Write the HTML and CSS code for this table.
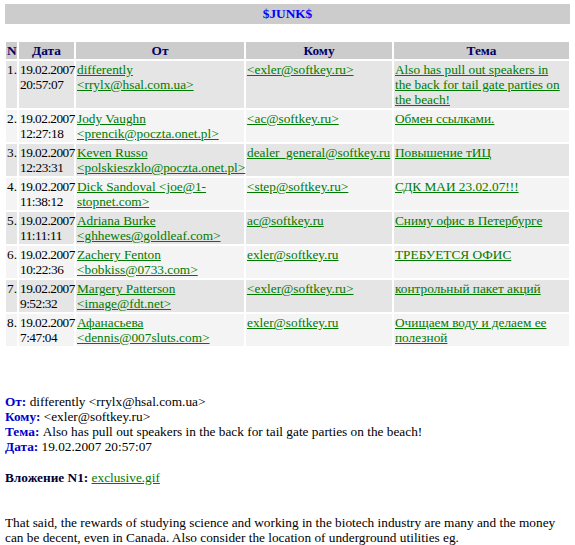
FILE: index.html
```html
<!DOCTYPE html>
<html>
<head>
<meta charset="utf-8">
<title>$JUNK$</title>
<link rel="stylesheet" href="styles.css">
</head>
<body>
<div class="titlebar">$JUNK$</div>
<table class="list">
  <thead>
    <tr><th class="c-n">N</th><th class="c-date">Дата</th><th class="c-from">От</th><th class="c-to">Кому</th><th class="c-subj">Тема</th></tr>
  </thead>
  <tbody>
    <tr class="odd"><td>1.</td><td class="date">19.02.2007 20:57:07</td><td><a href="#">differently<br>&lt;rrylx@hsal.com.ua&gt;</a></td><td><a href="#">&lt;exler@softkey.ru&gt;</a></td><td class="subj"><a href="#">Also has pull out speakers in the back for tail gate parties on the beach!</a></td></tr>
    <tr class="even"><td>2.</td><td class="date">19.02.2007 12:27:18</td><td><a href="#">Jody Vaughn &lt;prencik@poczta.onet.pl&gt;</a></td><td><a href="#">&lt;ac@softkey.ru&gt;</a></td><td class="subj"><a href="#">Обмен ссылками.</a></td></tr>
    <tr class="odd"><td>3.</td><td class="date">19.02.2007 12:23:31</td><td><a href="#">Keven Russo &lt;polskieszklo@poczta.onet.pl&gt;</a></td><td><a href="#">dealer_general@softkey.ru</a></td><td class="subj"><a href="#">Повышение тИЦ</a></td></tr>
    <tr class="even"><td>4.</td><td class="date">19.02.2007 11:38:12</td><td><a href="#">Dick Sandoval &lt;joe@1-stopnet.com&gt;</a></td><td><a href="#">&lt;step@softkey.ru&gt;</a></td><td class="subj"><a href="#">СДК МАИ 23.02.07!!!</a></td></tr>
    <tr class="odd"><td>5.</td><td class="date">19.02.2007 11:11:11</td><td><a href="#">Adriana Burke &lt;ghhewes@goldleaf.com&gt;</a></td><td><a href="#">ac@softkey.ru</a></td><td class="subj"><a href="#">Сниму офис в Петербурге</a></td></tr>
    <tr class="even"><td>6.</td><td class="date">19.02.2007 10:22:36</td><td><a href="#">Zachery Fenton &lt;bobkiss@0733.com&gt;</a></td><td><a href="#">exler@softkey.ru</a></td><td class="subj"><a href="#">ТРЕБУЕТСЯ ОФИС</a></td></tr>
    <tr class="odd"><td>7.</td><td class="date">19.02.2007 9:52:32</td><td><a href="#">Margery Patterson &lt;image@fdt.net&gt;</a></td><td><a href="#">&lt;exler@softkey.ru&gt;</a></td><td class="subj"><a href="#">контрольный пакет акций</a></td></tr>
    <tr class="even"><td>8.</td><td class="date">19.02.2007 7:47:04</td><td><a href="#">Афанасьева &lt;dennis@007sluts.com&gt;</a></td><td><a href="#">exler@softkey.ru</a></td><td class="subj"><a href="#">Очищаем воду и делаем ее полезной</a></td></tr>
  </tbody>
</table>

<div class="headers">
  <div><span class="label">От:</span> differently &lt;rrylx@hsal.com.ua&gt;</div>
  <div><span class="label">Кому:</span> &lt;exler@softkey.ru&gt;</div>
  <div><span class="label">Тема:</span> Also has pull out speakers in the back for tail gate parties on the beach!</div>
  <div><span class="label">Дата:</span> 19.02.2007 20:57:07</div>
</div>

<div class="attach"><span class="attach-label">Вложение N1:</span> <a href="#">exclusive.gif</a></div>

<p class="body-text">That said, the rewards of studying science and working in the biotech industry are many and the money can be decent, even in Canada. Also consider the location of underground utilities eg.</p>
</body>
</html>
```
FILE: styles.css
```css
html, body {
  background: #ffffff;
}
body {
  margin: 4px 5px;
  font-family: "Liberation Serif", "Times New Roman", serif;
  font-size: 13.3px;
  line-height: 15px;
  color: #000000;
}
a {
  color: #007a00;
  text-decoration: underline;
}
.titlebar {
  background: #cccccc;
  color: #0000ff;
  font-weight: bold;
  text-align: center;
  height: 20px;
  line-height: 20px;
}
.list {
  margin-top: 16px;
  width: 567px;
  table-layout: fixed;
  border-collapse: separate;
  border-spacing: 2px;
  margin-left: -1px;
}
.list th, .list td {
  box-sizing: border-box;
}
.c-n { width: 11px; }
.c-date { width: 55px; }
.c-from { width: 168px; }
.c-to { width: 146px; }
.c-subj { width: 175px; }
.list th {
  background: #cccccc;
  color: #000066;
  font-weight: bold;
  text-align: center;
  padding: 1px;
  height: 17px;
}
.list td {
  padding: 1px;
  vertical-align: top;
  text-align: left;
  overflow: visible;
}
.list td.subj {
  padding-right: 4px;
}
.list td.date {
  letter-spacing: -0.5px;
}
.list tr.odd td { background: #e5e5e5; }
.list tr.even td { background: #f4f4f4; }
.headers {
  margin-top: 46px;
}
.label {
  color: #0000cc;
  font-weight: bold;
}
.attach {
  margin-top: 16px;
}
.attach-label {
  color: #000033;
  font-weight: bold;
}
.body-text {
  margin: 30px 0 0 0;
}
```
